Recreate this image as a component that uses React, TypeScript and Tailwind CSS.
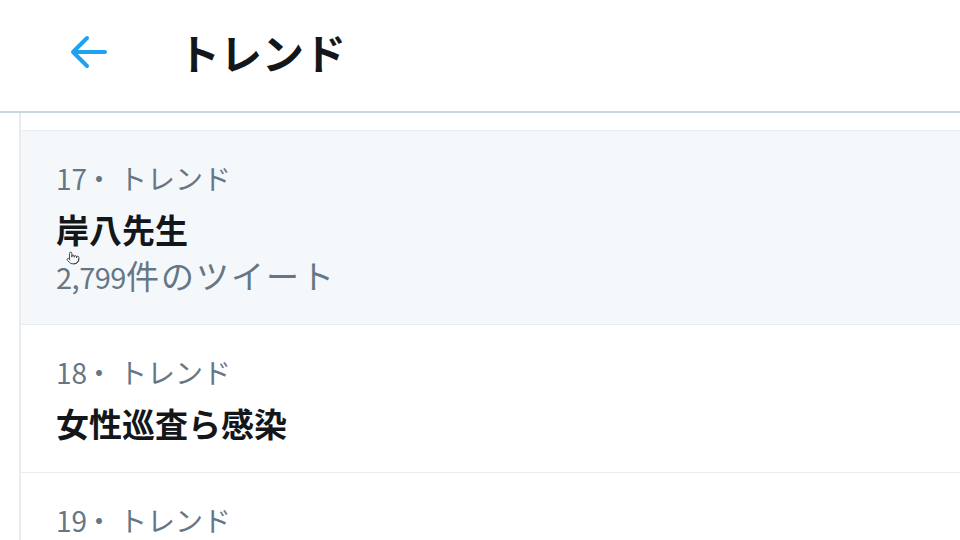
import React from "react";
import { Pointer } from "lucide-react";

const font = { fontFamily: '"Noto Sans CJK JP", "Noto Sans", sans-serif' };

function Row({
  rank,
  title,
  count,
  active,
  cursor,
}: {
  rank: number;
  title: string;
  count?: [string, string];
  active?: boolean;
  cursor?: boolean;
}) {
  return (
    <div
      className={`relative border-b border-[#e6ecf0] pl-[35px] pt-[29px] pb-[27px] ${
        active ? "bg-[#f5f8fa]" : "bg-white"
      }`}
    >
      <div className="text-[28px] leading-[36px] text-[#657786]">
        {rank}
        <span className="ml-[-2px] mr-[6px]">・</span>トレンド
      </div>
      <div className="mt-[11px] text-[33px] font-bold leading-[44px] text-[#14171a]">
        {title}
      </div>
      {count && (
        <div className="mt-[2px] h-[44px] text-[33px] leading-[44px] tracking-[2px] text-[#657786]">
          <span className="align-baseline text-[29px] leading-none tracking-[-0.5px]">
            {count[0]}
          </span>
          {count[1]}
        </div>
      )}
      {cursor && (
        <Pointer
          size={14}
          strokeWidth={1.5}
          className="absolute left-[45px] top-[120px] text-[#333]"
        />
      )}
    </div>
  );
}

export default function App() {
  return (
    <div className="h-[540px] w-[960px] overflow-hidden bg-white" style={font}>
      <header className="flex h-[113px] items-center border-b-2 border-[#ccd6dd] bg-white pb-[8px]">
        <div className="ml-[68px] flex h-[40px] w-[40px] items-center justify-center">
          <svg width="38" height="36" viewBox="0 0 38 36" fill="none">
            <path
              d="M4 18 H36 M18 4 L4 18 L18 32"
              stroke="#1da1f2"
              strokeWidth="4"
              strokeLinecap="round"
              strokeLinejoin="round"
            />
          </svg>
        </div>
        <h1 className="ml-[70px] text-[42px] font-bold leading-none text-[#14171a]">
          トレンド
        </h1>
      </header>
      <div className="ml-[19px] border-l-2 border-[#e6ecf0]">
        <div className="h-[18px] border-b border-[#e6ecf0]" />
        <Row
          rank={17}
          title="岸八先生"
          count={["2,799", "件のツイート"]}
          active
          cursor
        />
        <Row rank={18} title="女性巡査ら感染" />
        <Row rank={19} title="" />
      </div>
    </div>
  );
}
